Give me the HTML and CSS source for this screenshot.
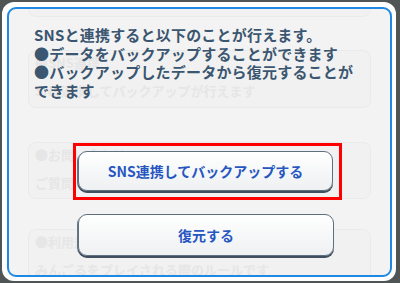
FILE: index.html
```html
<!DOCTYPE html>
<html lang="ja">
<head>
    <meta charset="UTF-8">
    <meta name="viewport" content="width=device-width, initial-scale=1.0">
    <title>SNS連携</title>
    <link rel="stylesheet" href="styles.css">
</head>
<body>
    <div class="dialog">
        <div class="panel">
            <!-- 背後の画面が透けて見える部分 -->
            <div class="ghost">
                <div class="ghost-box ghost-top"></div>
                <div class="ghost-box ghost-first">
                    <p>●SNS連携</p>
                    <p>SNS連携してバックアップが行えます</p>
                </div>
                <div class="ghost-box ghost-second">
                    <p>●お問い合わせ</p>
                    <p>ご質問・ご要望はこちら</p>
                </div>
                <div class="ghost-box ghost-third">
                    <p>●利用規約</p>
                    <p>みんごるをプレイされる際のルールです</p>
                </div>
            </div>

            <div class="content">
                <p class="intro">
                    SNSと連携すると以下のことが行えます。<br>
                    ●データをバックアップすることができます<br>
                    ●バックアップしたデータから復元することが<br>
                    できます
                </p>

                <div class="actions">
                    <div class="highlight">
                        <button class="btn">SNS連携してバックアップする</button>
                    </div>
                    <button class="btn btn-restore">復元する</button>
                </div>
            </div>
        </div>
    </div>
</body>
</html>
```

FILE: styles.css
```css
* {
    margin: 0;
    padding: 0;
    box-sizing: border-box;
}

body {
    font-family: "Noto Sans CJK JP", "Noto Sans", sans-serif;
    background: #4f5555;
    width: 400px;
    height: 283px;
    padding: 2px 4px 2px 2px;
    overflow: hidden;
}

.dialog {
    background: #ffffff;
    border-radius: 12px;
    padding: 5px 4px 4px 5px;
    height: 279px;
}

.panel {
    position: relative;
    height: 100%;
    border: 2px solid #1e88e5;
    border-radius: 9px;
    background: #f3f3f3;
    overflow: hidden;
}

.ghost {
    position: absolute;
    inset: 0;
    padding-left: 19px;
    padding-right: 19px;
}

.ghost-box {
    background: #f1f1f1;
    border: 1px solid #eaeaea;
    border-radius: 8px;
    padding: 3px 6px 0;
    font-size: 13px;
    font-weight: 700;
    line-height: 18px;
    color: #e6e6e6;
}

.ghost-box p + p {
    margin-top: 10px;
}

.ghost-top {
    height: 18px;
    margin-top: -10px;
}

.ghost-first {
    margin-top: 33px;
    height: 58px;
}

.ghost-second {
    margin-top: 34px;
    height: 57px;
}

.ghost-third {
    margin-top: 30px;
    height: 58px;
}

.content {
    position: relative;
}

.intro {
    padding: 17px 0 0 25px;
    font-size: 15px;
    font-weight: 700;
    line-height: 18.5px;
    letter-spacing: 0.2px;
    color: #3b5670;
}

.actions {
    display: flex;
    flex-direction: column;
    margin-top: 43px;
    margin-left: 64px;
    width: 269px;
}

.highlight {
    border: 3px solid #ff0000;
    padding: 5px 5px 6px 2px;
}

.btn {
    display: block;
    width: 255px;
    height: 40px;
    font-family: inherit;
    font-size: 14px;
    font-weight: 700;
    color: #2656c0;
    background: linear-gradient(#ffffff, #eef0f2);
    border: 1px solid #5e6f80;
    border-radius: 9px;
    box-shadow: 0 2px 0 #3f4f5f, -1px 1px 0 #6a7886;
}

.btn-restore {
    margin-top: 14px;
    margin-left: 5px;
    width: 256px;
    height: 42px;
}
```
